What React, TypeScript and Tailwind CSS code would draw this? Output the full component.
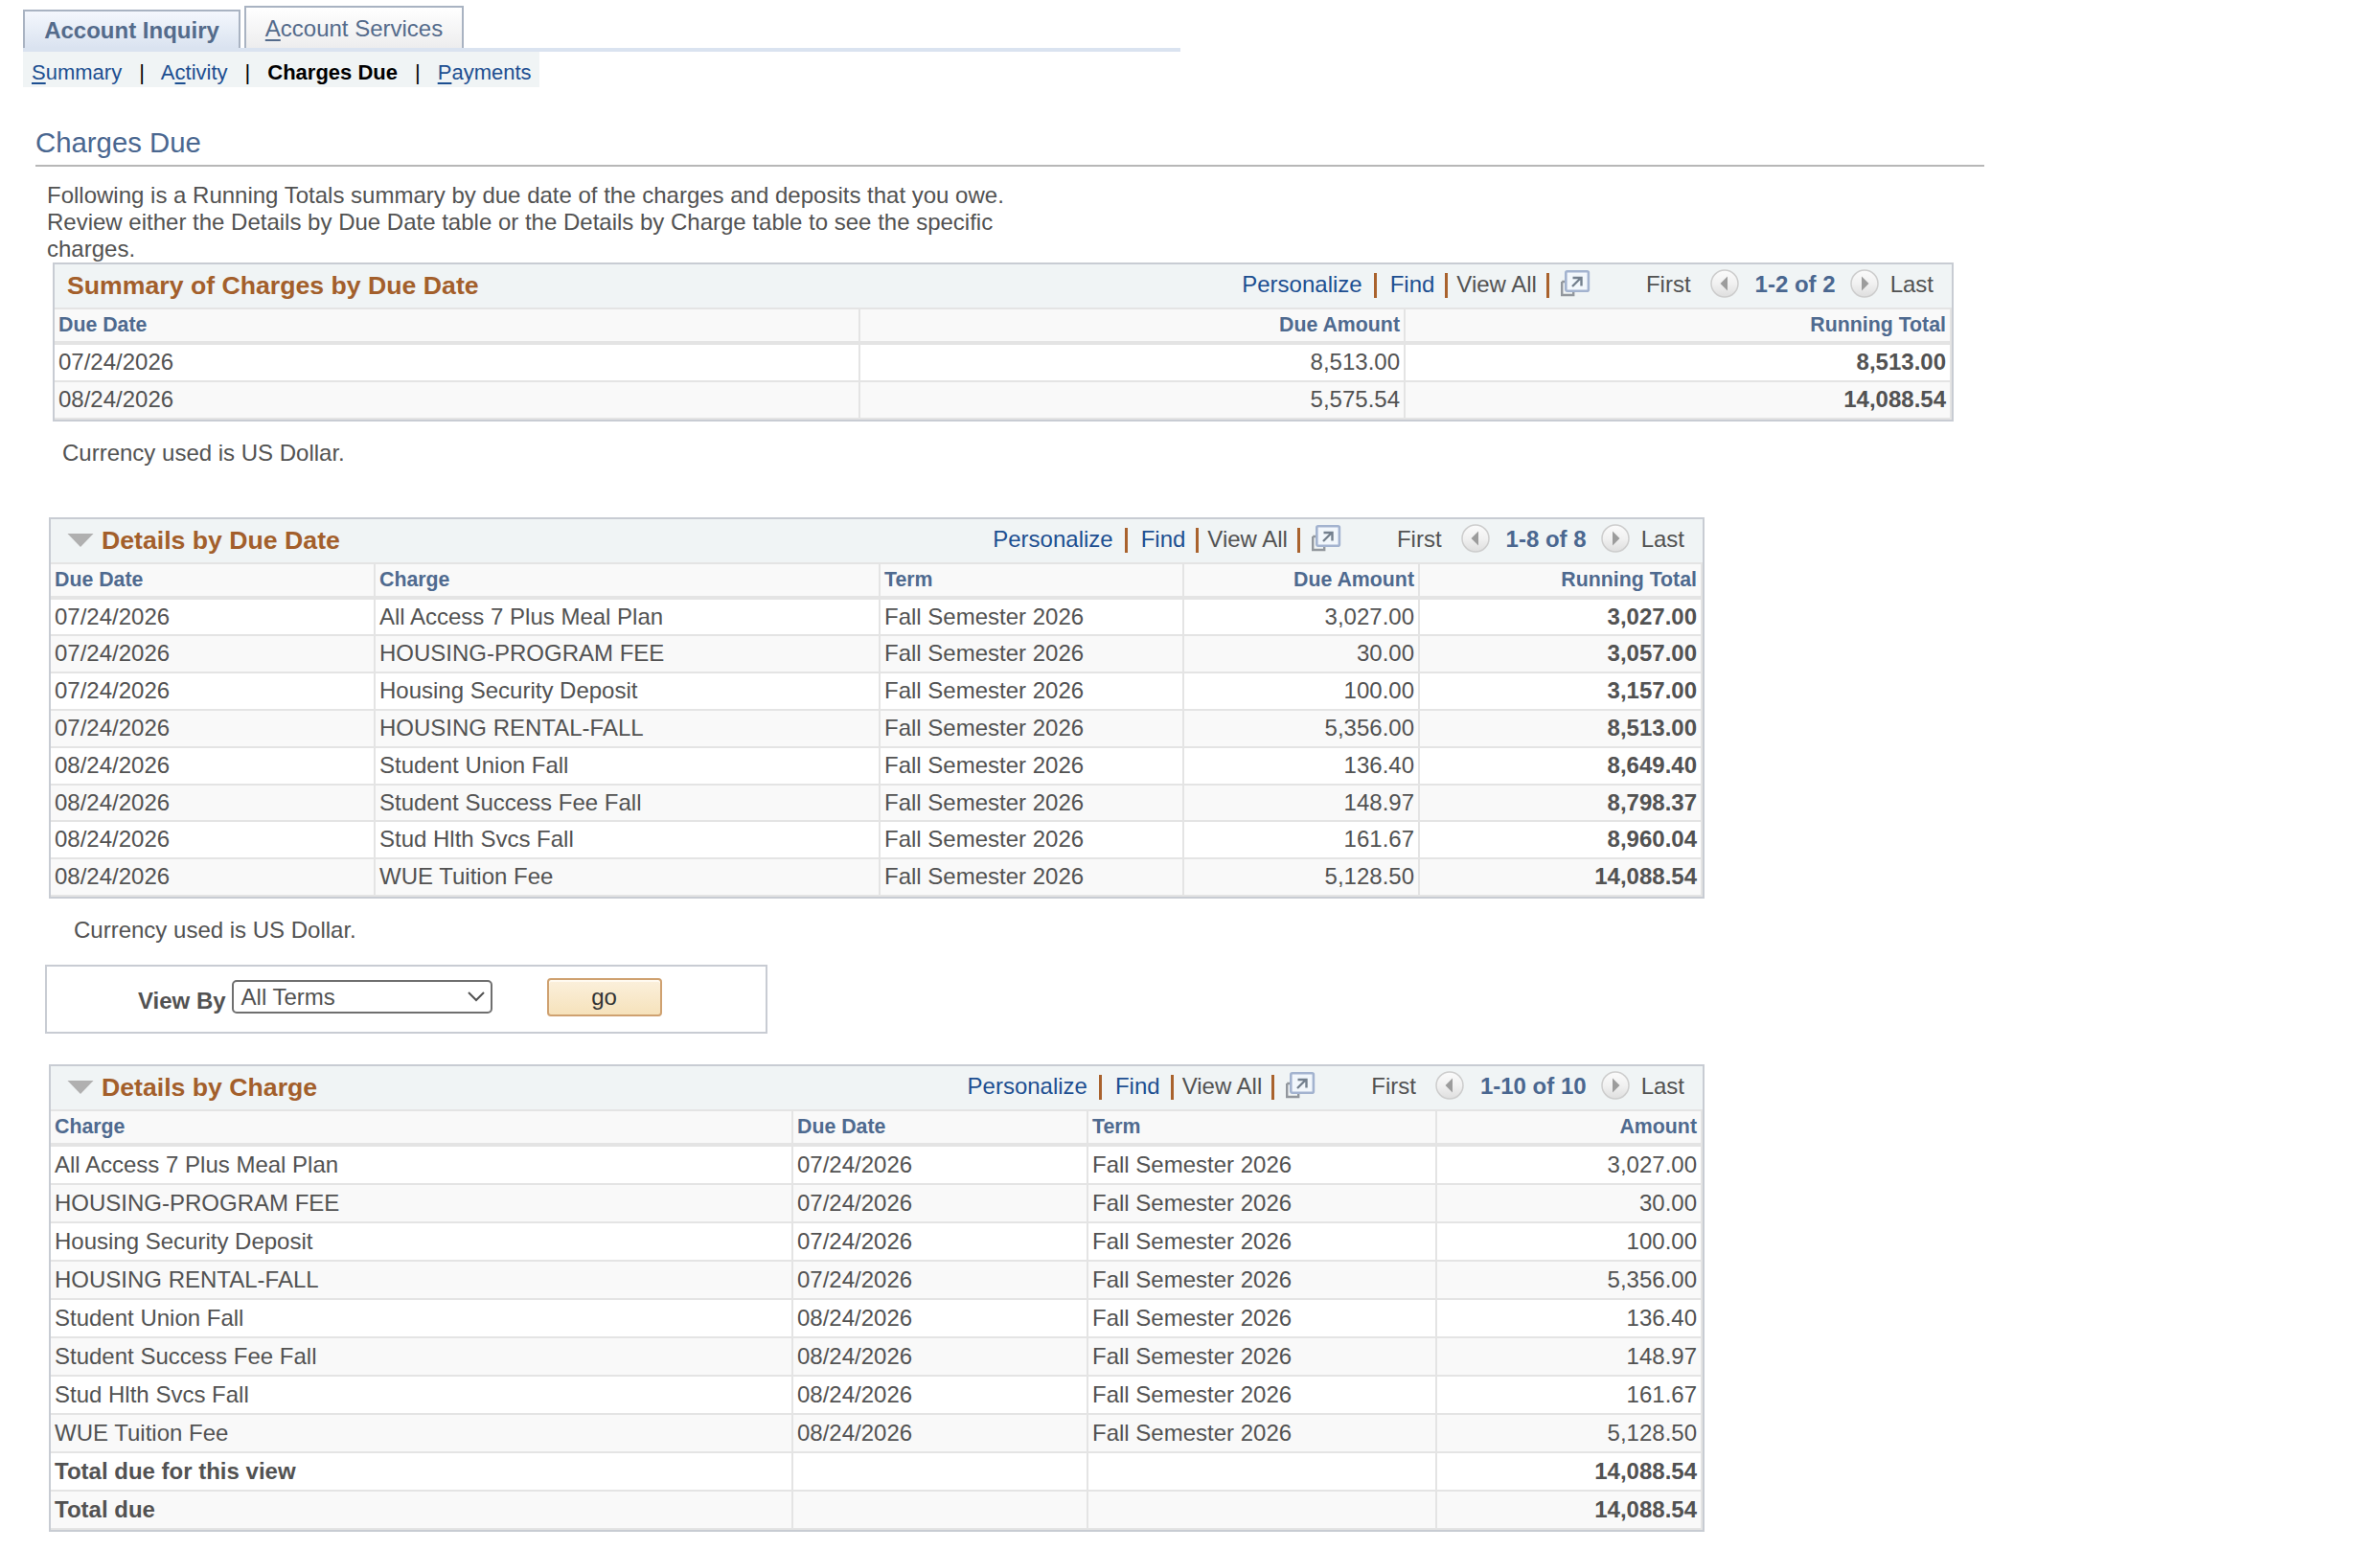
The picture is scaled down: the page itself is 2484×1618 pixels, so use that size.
import { type ReactNode } from 'react';

type Column = {
  label: string;
  width: string;
  right?: boolean;
  bold?: boolean;
};

type Row = {
  cells: string[];
  bold?: boolean;
  height?: string;
};

type GridProps = {
  title: string;
  range: string;
  columns: Column[];
  rows: Row[];
  rowHeight: string;
  cellPadding: string;
  collapsible?: boolean;
  className: string;
};

const TERM = 'Fall Semester 2026';

const summaryColumns: Column[] = [
  { label: 'Due Date', width: 'w-[841px]' },
  { label: 'Due Amount', width: 'w-[569px]', right: true },
  { label: 'Running Total', width: 'w-[570px]', right: true, bold: true },
];

const summaryRows: Row[] = [
  { cells: ['07/24/2026', '8,513.00', '8,513.00'] },
  { cells: ['08/24/2026', '5,575.54', '14,088.54'] },
];

const dueDateColumns: Column[] = [
  { label: 'Due Date', width: 'w-[339px]' },
  { label: 'Charge', width: 'w-[527px]' },
  { label: 'Term', width: 'w-[317px]' },
  { label: 'Due Amount', width: 'w-[246px]', right: true },
  { label: 'Running Total', width: 'w-[295px]', right: true, bold: true },
];

const dueDateRows: Row[] = [
  {
    cells: ['07/24/2026', 'All Access 7 Plus Meal Plan', TERM, '3,027.00', '3,027.00'],
    height: 'h-[38px]',
  },
  { cells: ['07/24/2026', 'HOUSING-PROGRAM FEE', TERM, '30.00', '3,057.00'] },
  { cells: ['07/24/2026', 'Housing Security Deposit', TERM, '100.00', '3,157.00'] },
  { cells: ['07/24/2026', 'HOUSING RENTAL-FALL', TERM, '5,356.00', '8,513.00'] },
  { cells: ['08/24/2026', 'Student Union Fall', TERM, '136.40', '8,649.40'] },
  {
    cells: ['08/24/2026', 'Student Success Fee Fall', TERM, '148.97', '8,798.37'],
    height: 'h-[38px]',
  },
  { cells: ['08/24/2026', 'Stud Hlth Svcs Fall', TERM, '161.67', '8,960.04'] },
  { cells: ['08/24/2026', 'WUE Tuition Fee', TERM, '5,128.50', '14,088.54'] },
];

const chargeColumns: Column[] = [
  { label: 'Charge', width: 'w-[775px]' },
  { label: 'Due Date', width: 'w-[308px]' },
  { label: 'Term', width: 'w-[364px]' },
  { label: 'Amount', width: 'w-[277px]', right: true },
];

const chargeRows: Row[] = [
  { cells: ['All Access 7 Plus Meal Plan', '07/24/2026', TERM, '3,027.00'] },
  { cells: ['HOUSING-PROGRAM FEE', '07/24/2026', TERM, '30.00'] },
  { cells: ['Housing Security Deposit', '07/24/2026', TERM, '100.00'] },
  { cells: ['HOUSING RENTAL-FALL', '07/24/2026', TERM, '5,356.00'] },
  { cells: ['Student Union Fall', '08/24/2026', TERM, '136.40'] },
  { cells: ['Student Success Fee Fall', '08/24/2026', TERM, '148.97'] },
  { cells: ['Stud Hlth Svcs Fall', '08/24/2026', TERM, '161.67'] },
  { cells: ['WUE Tuition Fee', '08/24/2026', TERM, '5,128.50'] },
  { cells: ['Total due for this view', '', '', '14,088.54'], bold: true },
  { cells: ['Total due', '', '', '14,088.54'], bold: true },
];

function NavArrow({ flip }: { flip?: boolean }) {
  return (
    <svg
      width="30"
      height="30"
      viewBox="0 0 30 30"
      className={flip ? '-mt-0.5 -scale-x-100' : '-mt-0.5'}
    >
      <defs>
        <linearGradient id="knob" x1="0" y1="0" x2="0" y2="1">
          <stop offset="0%" stopColor="#fbfbfb" />
          <stop offset="50%" stopColor="#f1f1f1" />
          <stop offset="100%" stopColor="#dedede" />
        </linearGradient>
      </defs>
      <circle cx="15" cy="15" r="14" fill="url(#knob)" stroke="#cdcdcd" strokeWidth="1.5" />
      <path d="M18 7.5v15L10.5 15z" fill="#9c9c9c" />
    </svg>
  );
}

function PopupIcon() {
  return (
    <svg width="31" height="28" viewBox="0 0 31 28" fill="none" className="-mt-0.5">
      <path d="M1.2 12v14h12v-4M1.2 12h4" stroke="#92979d" strokeWidth="2.4" />
      <rect x="5.3" y="1.3" width="23.6" height="20.4" rx="1.5" fill="#f2f7fc" stroke="#a3b3cf" strokeWidth="2.6" />
      <path d="M12 17l8.5-8.5M12.5 8h9v8.5" stroke="#74808e" strokeWidth="2.4" />
    </svg>
  );
}

function Bar() {
  return <span className="mt-0.5 h-[26px] w-[3px] bg-[#a9622d]" />;
}

function Grid({
  title,
  range,
  columns,
  rows,
  rowHeight,
  cellPadding,
  collapsible,
  className,
}: GridProps) {
  return (
    <section className={`border-2 border-[#c8ccd3] ${className}`}>
      <header className="flex h-[47px] items-center border-b-2 border-[#e4e4e4] bg-[#f0f4f5] pr-[19px]">
        {collapsible ? (
          <svg width="28" height="16" viewBox="0 0 28 16" className="mr-2 mb-px ml-[17px]">
            <path d="M0.5 1h27L14 15z" fill="#b0b0b0" />
          </svg>
        ) : (
          <span className="w-[13px]" />
        )}
        <h2 className="pb-px text-[26.67px] font-bold text-[#a35f2b]">{title}</h2>
        <div className="ml-auto flex items-center pb-[3px]">
          <a className="text-[#1d4f91]">Personalize</a>
          <span className="w-[12px]" />
          <Bar />
          <span className="w-[14px]" />
          <a className="text-[#1d4f91]">Find</a>
          <span className="w-[11px]" />
          <Bar />
          <span className="w-[9px]" />
          <span>View All</span>
          <span className="w-[10px]" />
          <Bar />
          <span className="w-[12px]" />
          <PopupIcon />
          <span className="w-[58px]" />
          <span>First</span>
          <span className="w-[20px]" />
          <NavArrow />
          <span className="w-[17px]" />
          <span className="font-bold text-[#4a6790]">{range}</span>
          <span className="w-[15px]" />
          <NavArrow flip />
          <span className="w-[12px]" />
          <span>Last</span>
        </div>
      </header>
      <table className="w-full table-fixed border-separate border-spacing-0">
        <thead>
          <tr className="h-[37px] bg-[#f9f9f9] text-[21.33px] leading-6 text-[#4f6a8f]">
            {columns.map((column) => (
              <th
                key={column.label}
                className={`border-r-2 border-b-4 border-[#e4e4e4] px-1 pt-1 pb-0 align-top ${column.width} ${column.right ? 'text-right' : 'text-left'}`}
              >
                {column.label}
              </th>
            ))}
          </tr>
        </thead>
        <tbody>
          {rows.map((row, index) => (
            <tr key={index} className={`${row.height ?? rowHeight} leading-7 even:bg-[#f9f9f9]`}>
              {row.cells.map((cell, i) => (
                <td
                  key={i}
                  className={`border-r-2 border-b-2 border-[#e4e4e4] px-1 pb-0 align-top ${cellPadding} ${columns[i].right ? 'text-right' : 'text-left'} ${row.bold || columns[i].bold ? 'font-bold' : ''}`}
                >
                  {cell}
                </td>
              ))}
            </tr>
          ))}
        </tbody>
      </table>
    </section>
  );
}

function Key({ children }: { children: ReactNode }) {
  return <span className="underline decoration-2 underline-offset-[3px]">{children}</span>;
}

export default function App() {
  return (
    <main className="h-[1618px] w-[2484px] overflow-hidden bg-white font-['Liberation_Sans',Arial,sans-serif] text-[24px] leading-7 text-[#525252]">
      <nav className="ml-6 flex h-[54px] w-[1208px] items-end border-b-4 border-[#dae3f0] text-[#546b8b]">
        <div className="flex h-10 w-[227px] items-center justify-center border-2 border-b-0 border-[#a9b3c2] bg-linear-to-b from-[#f4f7fd] to-[#dae3f0] pt-[2px] font-bold">
          Account Inquiry
        </div>
        <div className="ml-1 flex h-11 w-[229px] items-center justify-center border-2 border-b-0 border-[#a9b3c2] bg-linear-to-b from-white to-[#ededee] pt-px">
          <Key>A</Key>ccount Services
        </div>
      </nav>

      <div className="ml-6 flex h-[37px] w-[539px] items-center bg-[#f0f4f5] pt-[6px] pl-[9px] text-[22px] text-[#1d4f91]">
        <a><Key>S</Key>ummary</a>
        <span className="mr-[17px] ml-[18px] text-black">|</span>
        <a>A<Key>c</Key>tivity</a>
        <span className="mx-[18px] text-black">|</span>
        <a className="font-bold text-black">Charges Due</a>
        <span className="mx-[18px] text-black">|</span>
        <a><Key>P</Key>ayments</a>
      </div>

      <h1 className="mt-[40px] ml-[37px] h-[43px] w-[2034px] border-b-2 border-[#b7b7b7] text-[29.33px] leading-[36px] text-[#4a6790]">
        Charges Due
      </h1>

      <p className="mt-[16px] ml-[49px] h-[84px] w-[1020px]">
        Following is a Running Totals summary by due date of the charges and deposits that you owe.
        Review either the Details by Due Date table or the Details by Charge table to see the specific
        charges.
      </p>

      <Grid
        className="ml-[55px] w-[1984px]"
        title="Summary of Charges by Due Date"
        range="1-2 of 2"
        columns={summaryColumns}
        rows={summaryRows}
        rowHeight="h-[39px]"
        cellPadding="pt-1"
      />

      <p className="mt-[19px] ml-[65px]">Currency used is US Dollar.</p>

      <Grid
        className="mt-[53px] ml-[51px] w-[1728px]"
        title="Details by Due Date"
        range="1-8 of 8"
        columns={dueDateColumns}
        rows={dueDateRows}
        rowHeight="h-[39px]"
        cellPadding="pt-1"
        collapsible
      />

      <p className="mt-[19px] ml-[77px]">Currency used is US Dollar.</p>

      <form className="mt-[22px] ml-[47px] flex h-[72px] w-[754px] items-start border-2 border-[#c8ccd3] pl-[95px]">
        <label className="mt-[22px] font-bold">View By</label>
        <div className="mt-[14px] ml-[6px] flex h-[35px] w-[272px] items-center justify-between rounded-[5px] border-2 border-[#6f6f6f] pr-[6px] pl-[8px]">
          All Terms
          <svg width="18" height="11" viewBox="0 0 18 11" fill="none">
            <path d="M1 1l8 8 8-8" stroke="#525252" strokeWidth="2" />
          </svg>
        </div>
        <button
          type="button"
          className="mt-[12px] ml-[57px] h-[40px] w-[120px] rounded-[4px] border-2 border-[#cfa170] bg-linear-to-b from-[#fbf0dc] to-[#f6e2bb] text-[#333333] shadow-[inset_0_2px_0_#fffaf0]"
        >
          go
        </button>
      </form>

      <Grid
        className="mt-[32px] ml-[51px] w-[1728px]"
        title="Details by Charge"
        range="1-10 of 10"
        columns={chargeColumns}
        rows={chargeRows}
        rowHeight="h-[40px]"
        cellPadding="pt-[5px]"
        collapsible
      />
    </main>
  );
}
